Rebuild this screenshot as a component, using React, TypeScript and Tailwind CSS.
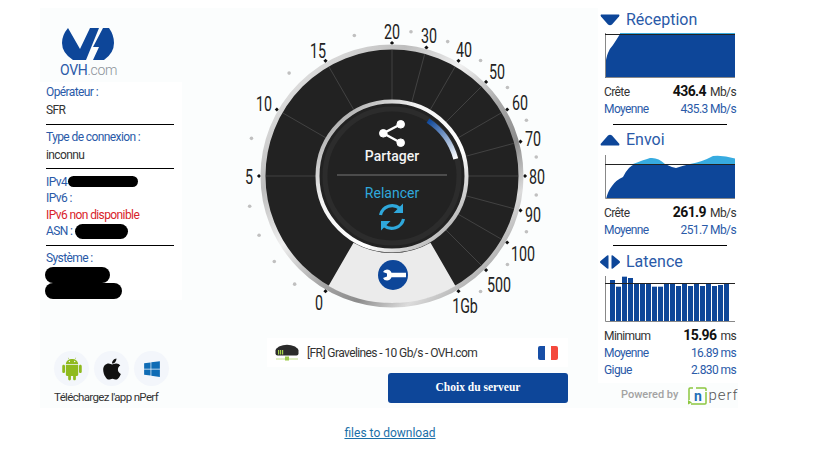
import { FaApple, FaWindows } from "react-icons/fa";
import { AiFillAndroid } from "react-icons/ai";

const BLUE = "#0d4699";

const polar = (angle: number, r: number) => {
  const a = ((angle - 90) * Math.PI) / 180;
  return { x: 160 + r * Math.cos(a), y: 160 + r * Math.sin(a) };
};

const labels = [
  { t: "0", x: 87, y: 294 },
  { t: "5", x: 17, y: 168 },
  { t: "10", x: 32, y: 95 },
  { t: "15", x: 86, y: 42 },
  { t: "20", x: 160, y: 23 },
  { t: "30", x: 197, y: 27 },
  { t: "40", x: 232, y: 41 },
  { t: "50", x: 265, y: 63 },
  { t: "60", x: 288, y: 94 },
  { t: "70", x: 301, y: 130 },
  { t: "80", x: 305, y: 168 },
  { t: "90", x: 301, y: 206 },
  { t: "100", x: 291, y: 245 },
  { t: "500", x: 267, y: 276 },
  { t: "1Gb", x: 233, y: 297 },
];

const majorTicks = [-150, -90, -60, -30, 0, 15, 30, 45, 60, 75, 90, 105, 120, 135, 150];
const minorDots = [-15, -45, -75, -102, -114, -126, -138, 7.5, 22.5, 37.5, 52.5, 67.5, 82.5, 97.5, 112.5, 127.5, 142.5];
const spokes = [-90, -60, -30, 0, 15, 30, 45, 60, 75, 90, 105, 120, 135];

function Gauge() {
  const sa = polar(-150, 77);
  const sb = polar(-150, 127);
  const sc = polar(150, 127);
  const sd = polar(150, 77);
  const arcA = polar(33, 66);
  const arcB = polar(75, 66);
  return (
    <svg width="320" height="320" viewBox="0 0 320 320" className="block">
      <defs>
        <linearGradient id="outerRing" x1="0.1" y1="0.1" x2="0.9" y2="0.9">
          <stop offset="0" stopColor="#e4e4e4" />
          <stop offset="0.22" stopColor="#bdbdbd" />
          <stop offset="0.4" stopColor="#f0f0f0" />
          <stop offset="0.58" stopColor="#a8a8a8" />
          <stop offset="0.72" stopColor="#8c8c8c" />
          <stop offset="0.85" stopColor="#dcdcdc" />
          <stop offset="1" stopColor="#a0a0a0" />
        </linearGradient>
        <linearGradient id="innerRing" x1="0" y1="0" x2="1" y2="1">
          <stop offset="0" stopColor="#8a8a8a" />
          <stop offset="0.35" stopColor="#f4f4f4" />
          <stop offset="0.65" stopColor="#ffffff" />
          <stop offset="1" stopColor="#8f8f8f" />
        </linearGradient>
        <linearGradient id="progress" gradientUnits="userSpaceOnUse" x1={arcA.x} y1={arcA.y} x2={arcB.x} y2={arcB.y}>
          <stop offset="0" stopColor={BLUE} />
          <stop offset="1" stopColor="#ffffff" />
        </linearGradient>
      </defs>

      {minorDots.map((a) => {
        const p = polar(a, 145.5);
        return <circle key={a} cx={p.x} cy={p.y} r="1.8" fill="#c0c0c0" />;
      })}
      {majorTicks.map((a) => {
        const p = polar(a, 133);
        return <rect key={a} x={p.x - 1.5} y={p.y - 1.5} width="3" height="3" fill="#111" transform={`rotate(45 ${p.x} ${p.y})`} />;
      })}

      <circle cx="160" cy="160" r="129" fill="#222222" stroke="url(#outerRing)" strokeWidth="5" />
      {spokes.map((a) => {
        const p = polar(a, 76);
        const q = polar(a, 126);
        return <line key={a} x1={p.x} y1={p.y} x2={q.x} y2={q.y} stroke="#4a4a4a" strokeWidth="0.8" />;
      })}
      <path
        d={`M${sa.x} ${sa.y} L${sb.x} ${sb.y} A127 127 0 0 0 ${sc.x} ${sc.y} L${sd.x} ${sd.y} A77 77 0 0 1 ${sa.x} ${sa.y}Z`}
        fill="#ebebeb"
      />

      <circle cx="160" cy="160" r="74.5" fill="#222222" stroke="url(#innerRing)" strokeWidth="4" />
      <circle cx="160" cy="160" r="67" fill="none" stroke="#2c2c2c" strokeWidth="5" />
      <path d={`M${arcA.x} ${arcA.y} A66 66 0 0 1 ${arcB.x} ${arcB.y}`} fill="none" stroke="url(#progress)" strokeWidth="5" />
      <line x1="105" y1="159" x2="215" y2="159" stroke="#777" strokeWidth="1" />

      <g fill="#fff" stroke="#fff">
        <path d="M168.7 108.3 L151.3 117.3 L168.7 126.7" fill="none" strokeWidth="2.4" />
        <circle cx="151.3" cy="117.3" r="3.8" />
        <circle cx="168.7" cy="108.3" r="3.8" />
        <circle cx="168.7" cy="126.7" r="3.8" />
      </g>
      <text x="160" y="145" textAnchor="middle" fontSize="14" fontWeight="500" fill="#f4f4f4" fontFamily="Roboto, sans-serif">Partager</text>
      <text x="160" y="182" textAnchor="middle" fontSize="14" fill="#2fa8dc" fontFamily="Roboto, sans-serif">Relancer</text>

      <g>
        <path d="M148.5 199 A12 12 0 0 1 168 192.5" fill="none" stroke="#2fa8dc" strokeWidth="3.2" />
        <path d="M171 187.5 V197 H161.5Z" fill="#2fa8dc" />
        <path d="M171.5 203 A12 12 0 0 1 152 209.5" fill="none" stroke="#2fa8dc" strokeWidth="3.2" />
        <path d="M149 214.5 V205 H158.5Z" fill="#2fa8dc" />
      </g>

      <circle cx="161" cy="259" r="15" fill={BLUE} />
      <path
        d="M151 256 Q152 253.5 155 253.5 Q158 253.5 159.5 256.7 L174 256.7 V261.3 L159.5 261.3 Q158 264.5 155 264.5 Q152 264.5 151 262 L155 260.5 V257.5Z"
        fill="#fff"
      />

      {labels.map((l) => (
        <text
          key={l.t}
          transform={`translate(${l.x} ${l.y}) scale(0.68 1)`}
          textAnchor="middle"
          fontSize="21"
          fill="#222"
          fontFamily="Roboto, sans-serif"
        >
          {l.t}
        </text>
      ))}
    </svg>
  );
}

function OvhLogo() {
  return (
    <svg width="52" height="33" viewBox="62 28 52 33" className="block">
      <path d="M68 28 L80 49 L90 28 L99 28 L86 60 L73 60 Q62 53 62 43 Q62 35 68 28Z" fill={BLUE} />
      <path d="M103 28 L109 28 Q114 35 114 43 Q114 53 104 60 L93 60 L99 47 L93 47Z" fill={BLUE} />
    </svg>
  );
}

function Label({ children, red }: { children: React.ReactNode; red?: boolean }) {
  return <div className={`leading-[17px] whitespace-nowrap ${red ? "h-[16px] text-[#d8232a]" : "h-[17px] text-[#2a5aa8]"}`}>{children}</div>;
}

function Blob({ className }: { className: string }) {
  return <span className={`inline-block bg-black rounded-full ${className}`} />;
}

function LeftColumn() {
  return (
    <div className="w-[142px] flex flex-col">
      <div className="h-[74px] pt-[20px] pl-[22px]">
        <OvhLogo />
        <div className="-ml-[2px] mt-[1px] text-[14px] leading-[17px] tracking-[-0.3px] text-[#2a5aa8]">
          OVH<span className="text-[#8c9299] font-light">.com</span>
        </div>
      </div>
      <div className="h-[218px] bg-white px-[6px] pt-[2px] pr-[8px] text-[12px] tracking-[-0.6px]">
        <Label>Opérateur :</Label>
        <div className="h-[17px] leading-[18px] text-[#333]">SFR</div>
        <div className="h-px bg-black mt-[6px]" />
        <div className="mt-[4px]"><Label>Type de connexion :</Label></div>
        <div className="h-[17px] leading-[18px] text-[#333]">inconnu</div>
        <div className="h-px bg-black mt-[5px]" />
        <div className="mt-[4px] h-[17px] flex items-center text-[#2a5aa8]">
          IPv4
          <Blob className="ml-[1px] w-[70px] h-[11px]" />
        </div>
        <Label>IPv6 :</Label>
        <Label red>IPv6 non disponible</Label>
        <div className="h-[16px] flex items-center text-[#2a5aa8]">
          ASN :
          <Blob className="ml-[3px] w-[53px] h-[15px]" />
        </div>
        <div className="h-px bg-black mt-[6px]" />
        <div className="mt-[4px]"><Label>Système :</Label></div>
        <div className="flex flex-col">
          <Blob className="w-[65px] h-[16px] -ml-[1px]" />
          <Blob className="w-[77px] h-[16px] -ml-[1px]" />
        </div>
      </div>
      <div className="flex flex-col items-center pl-[1px] pt-[51px]">
        <div className="flex gap-[5px]">
          <div className="w-[35px] h-[35px] rounded-full bg-[#f3f6fb] flex items-center justify-center">
            <AiFillAndroid size={26} color="#8fba1e" />
          </div>
          <div className="w-[35px] h-[35px] rounded-full bg-[#f3f6fb] flex items-center justify-center">
            <FaApple size={24} color="#111" />
          </div>
          <div className="w-[35px] h-[35px] rounded-full bg-[#f3f6fb] flex items-center justify-center">
            <FaWindows size={18} color="#0f6cb5" />
          </div>
        </div>
        <div className="mt-[4px] mr-[11px] text-[11.5px] tracking-[-0.65px] leading-[15px] text-[#333] whitespace-nowrap">Téléchargez l'app nPerf</div>
      </div>
    </div>
  );
}

function ServerIcon() {
  return (
    <svg width="24" height="17" viewBox="0 0 24 17" className="block">
      <path d="M4 2.5 Q12 -1 20 2.5 L23 5 L1 5Z" fill="#2b2b2b" />
      <rect x="0.5" y="4.5" width="23" height="7" rx="2" fill="#2b2b2b" />
      <rect x="3" y="6" width="1.2" height="4.5" fill="#a5d24a" />
      <rect x="5" y="6" width="1.2" height="4.5" fill="#a5d24a" />
      <rect x="7" y="6" width="1.2" height="4.5" fill="#a5d24a" />
      <rect x="1" y="14.5" width="22" height="1" fill="#c2e08a" />
      <rect x="10" y="12.5" width="4" height="4" fill="#9ccc4a" />
    </svg>
  );
}

function CenterColumn() {
  return (
    <div className="flex-1 flex flex-col">
      <div className="ml-[50px] mt-[8px]">
        <Gauge />
      </div>
      <div className="ml-[85px] mt-[2px] w-[301px] h-[29px] bg-white flex items-center">
        <div className="ml-[8px]"><ServerIcon /></div>
        <div className="ml-[8px] text-[12px] tracking-[-0.6px] text-[#333] whitespace-nowrap">[FR] Gravelines - 10 Gb/s - OVH.com</div>
        <div className="ml-auto mr-[10px] flex w-[20px] h-[14px] rounded-[2px] overflow-hidden">
          <div className="flex-1 bg-[#174ea6]" />
          <div className="flex-1 bg-white" />
          <div className="flex-1 bg-[#f4483c]" />
        </div>
      </div>
      <button className="ml-[206px] mt-[6px] w-[180px] h-[30px] bg-[#0d4699] rounded-[3px] text-white text-[11.5px] font-bold font-['Liberation_Serif',serif]">
        Choix du serveur
      </button>
    </div>
  );
}

function Stat({ name, value, unit, strong }: { name: string; value: string; unit: string; strong?: boolean }) {
  return (
    <div className={`h-[17px] flex items-center justify-between text-[12px] tracking-[-0.6px] whitespace-nowrap ${strong ? "text-[#333]" : "text-[#2a5aa8]"}`}>
      <span>{name}</span>
      <span>
        {strong ? <b className="text-[14px] font-bold text-[#111] mr-[4px]">{value}</b> : value + " "}
        {unit}
      </span>
    </div>
  );
}

function Heading({ icon, children }: { icon: React.ReactNode; children: string }) {
  return (
    <div className="h-[20px] flex items-center pl-[2px]">
      <div className="w-[20px] flex justify-center">{icon}</div>
      <span className="ml-[6px] text-[16px] text-[#2a5aa8]">{children}</span>
    </div>
  );
}

const bars = [120, 140, 110, 114, 130, 130, 130, 140, 140, 130, 130, 138, 130, 138, 130, 138, 130, 138, 135, 130];

function Axes({ w, h, line }: { w: number; h: number; line: number }) {
  return (
    <>
      <path d={`M0.5 0 V${h - 0.5} H${w}`} fill="none" stroke="#888" strokeWidth="1" />
      <line x1="0" y1={line} x2={w} y2={line} stroke="#222" strokeWidth="1" />
    </>
  );
}

function ReceptionChart() {
  return (
    <svg width="130" height="45" className="block">
      <path d="M15 0 H130 V1 H15Z" fill="#37abe0" />
      <path d="M0 45 V35 Q1 24 3 20 Q5 15 8 12 Q12 6 15 1 H130 V45Z" fill={BLUE} />
      <Axes w={130} h={45} line={1.5} />
    </svg>
  );
}

function UploadChart() {
  return (
    <svg width="130" height="44" className="block">
      <path d="M28 9 Q38 5 45 3 Q53 2 60 9Z M85 9 Q97 7 108 1 Q118 0 130 3.5 V9Z" fill="#37abe0" />
      <path d="M1 44 Q3 36 7 31 Q11 25 18 22 Q21 16 24 13 Q27 10 30 9 H60 Q66 12 71 13 Q77 11 85 9 H130 V44Z" fill={BLUE} />
      <Axes w={130} h={44} line={9.5} />
    </svg>
  );
}

function LatencyChart() {
  return (
    <svg width="130" height="46" className="block">
      {bars.map((z, i) => {
        const top = (z - 108) / 3;
        return <rect key={i} x={5 + i * 6} y={top} width="5" height={46 - top} fill={BLUE} />;
      })}
      <Axes w={130} h={46} line={7.5} />
    </svg>
  );
}

function RightColumn() {
  return (
    <div className="w-[140px] flex flex-col bg-white">
      <div className="pl-0 pr-[2px] pt-[2px]">
        <Heading
          icon={
            <svg width="20" height="12" viewBox="0 0 20 12">
              <path d="M1 0.5 H19 Q20 1 19 2.5 L12 10.5 Q10 12 8 10.5 L1 2.5 Q0 1 1 0.5Z" fill={BLUE} />
            </svg>
          }
        >
          Réception
        </Heading>
        <div className="ml-[7px] mt-[3px]"><ReceptionChart /></div>
        <div className="ml-[6px] mt-[5px]">
          <Stat name="Crête" value="436.4" unit="Mb/s" strong />
          <Stat name="Moyenne" value="435.3" unit="Mb/s" />
        </div>
        <div className="h-px bg-black ml-[15px] mr-[9px] mt-[7px]" />

        <div className="mt-[5px]">
          <Heading
            icon={
              <svg width="20" height="12" viewBox="0 0 20 12">
                <path d="M1 11.5 H19 Q20 11 19 9.5 L12 1.5 Q10 0 8 1.5 L1 9.5 Q0 11 1 11.5Z" fill={BLUE} />
              </svg>
            }
          >
            Envoi
          </Heading>
        </div>
        <div className="ml-[7px] mt-[5px]"><UploadChart /></div>
        <div className="ml-[6px] mt-[5px]">
          <Stat name="Crête" value="261.9" unit="Mb/s" strong />
          <Stat name="Moyenne" value="251.7" unit="Mb/s" />
        </div>
        <div className="h-px bg-black ml-[15px] mr-[9px] mt-[7px]" />

        <div className="mt-[6px]">
          <Heading
            icon={
              <svg width="20" height="14" viewBox="0 0 20 14">
                <path d="M8.5 0.5 V13.5 Q7.5 14 6.5 13 L0.5 8 Q-0.5 7 0.5 6 L6.5 1 Q7.5 0 8.5 0.5Z" fill={BLUE} />
                <path d="M11.5 0.5 V13.5 Q12.5 14 13.5 13 L19.5 8 Q20.5 7 19.5 6 L13.5 1 Q12.5 0 11.5 0.5Z" fill={BLUE} />
              </svg>
            }
          >
            Latence
          </Heading>
        </div>
        <div className="ml-[7px] mt-[4px]"><LatencyChart /></div>
        <div className="ml-[6px] mt-[5px]">
          <Stat name="Minimum" value="15.96" unit="ms" strong />
          <Stat name="Moyenne" value="16.89" unit="ms" />
          <Stat name="Gigue" value="2.830" unit="ms" />
        </div>
      </div>
      <div className="mt-[5px] h-[26px] bg-[#fbfdfd] flex items-center pl-[23px] overflow-hidden">
        <span className="text-[11px] font-medium text-[#a3a3a3] whitespace-nowrap">Powered by</span>
        <div className="ml-[10px] w-[19px] h-[18px] relative shrink-0">
          <svg width="19" height="18" viewBox="0 0 19 18" className="block">
            <path d="M5 1 H2 Q1 1 1 2 V13 M3 17 H17 Q18 17 18 16 V5 M8 1 H17 Q18 1 18 2 V4" fill="none" stroke="#8cc63f" strokeWidth="1.5" />
            <path d="M0 13 L4 15.5 L0 17.5Z" fill="#8cc63f" />
          </svg>
          <span className="absolute inset-0 flex items-center justify-center text-[14px] font-bold leading-none text-[#1e6fb8]">n</span>
        </div>
        <span className="ml-[1px] text-[15px] font-light tracking-[1px] text-[#555] whitespace-nowrap">perf</span>
      </div>
    </div>
  );
}

export default function App() {
  return (
    <div className="min-h-screen bg-white font-['Roboto',sans-serif]">
      <div className="pt-[8px] pl-[40px]">
        <div className="flex w-[698px] h-[400px] bg-[#fbfdfd]">
          <LeftColumn />
          <CenterColumn />
          <RightColumn />
        </div>
      </div>
      <div className="mt-[12px] text-center pr-[37px]">
        <a href="#" className="text-[12px] text-[#1b6fa8] underline">files to download</a>
      </div>
    </div>
  );
}
